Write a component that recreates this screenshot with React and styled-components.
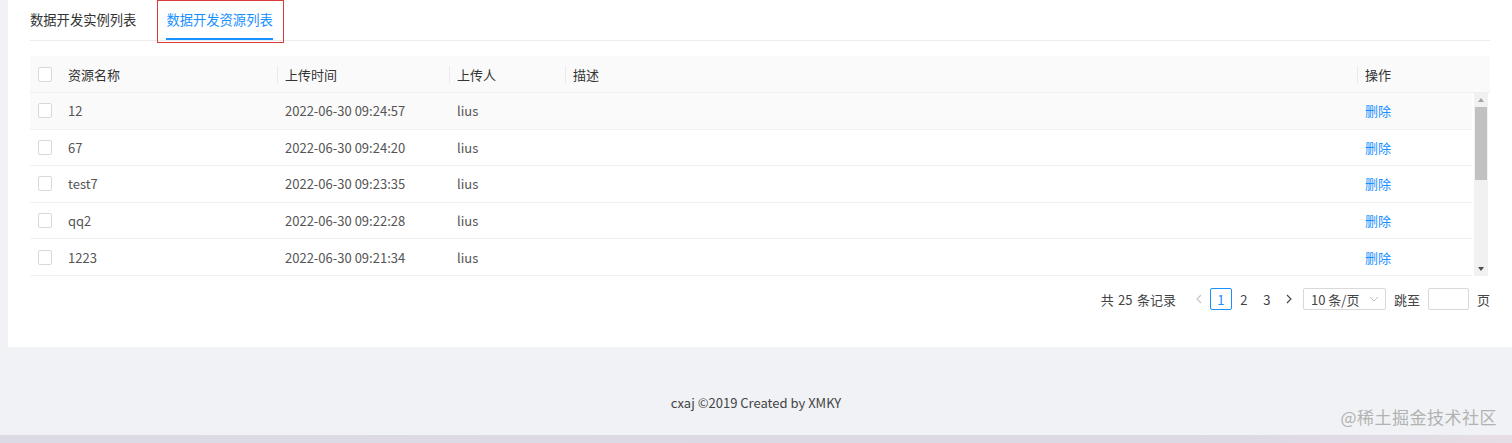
import React from "react";
import styled, { createGlobalStyle } from "styled-components";

const rows = [
  { name: "12", time: "2022-06-30 09:24:57", user: "lius", hover: true },
  { name: "67", time: "2022-06-30 09:24:20", user: "lius" },
  { name: "test7", time: "2022-06-30 09:23:35", user: "lius" },
  { name: "qq2", time: "2022-06-30 09:22:28", user: "lius" },
  { name: "1223", time: "2022-06-30 09:21:34", user: "lius" },
];

const GlobalStyle = createGlobalStyle`
  html, body {
    margin: 0;
    padding: 0;
    background: #f0f2f5;
    font-family: "Noto Sans CJK SC", "Noto Sans", sans-serif;
  }
  * { box-sizing: border-box; }
`;

const App = () => {
  return (
    <>
      <GlobalStyle />
      <Page>
        <Card>
          <TabBar>
            <Tab>数据开发实例列表</Tab>
            <Tab active>
              数据开发资源列表
              <Mark />
            </Tab>
          </TabBar>

          <Table>
            <HeadRow>
              <Cell>
                <Check />
              </Cell>
              <HeadCell>资源名称</HeadCell>
              <HeadCell sep>上传时间</HeadCell>
              <HeadCell sep>上传人</HeadCell>
              <HeadCell sep>描述</HeadCell>
              <HeadCell sep>操作</HeadCell>
              <Cell />
            </HeadRow>
            <BodyWrap>
              <Body>
                {rows.map((r) => (
                  <Row key={r.name} hover={r.hover}>
                    <Cell>
                      <Check />
                    </Cell>
                    <Cell>{r.name}</Cell>
                    <Cell>{r.time}</Cell>
                    <Cell>{r.user}</Cell>
                    <Cell />
                    <Cell>
                      <LinkText>删除</LinkText>
                    </Cell>
                  </Row>
                ))}
              </Body>
              <ScrollBar>
                <Arrow up />
                <Thumb />
                <Track />
                <Arrow />
              </ScrollBar>
            </BodyWrap>
          </Table>

          <Pager>
            <Total>共 25 条记录</Total>
            <PageArrow disabled>
              <svg width="8" height="10" viewBox="0 0 8 10">
                <path d="M6 1 L2 5 L6 9" fill="none" stroke="currentColor" strokeWidth="1.1" />
              </svg>
            </PageArrow>
            <PageItem active>1</PageItem>
            <PageItem>2</PageItem>
            <PageItem>3</PageItem>
            <PageArrow>
              <svg width="8" height="10" viewBox="0 0 8 10">
                <path d="M2 1 L6 5 L2 9" fill="none" stroke="currentColor" strokeWidth="1.1" />
              </svg>
            </PageArrow>
            <SizeSelect>
              10 条/页
              <svg width="10" height="6" viewBox="0 0 10 6">
                <path d="M1 1 L5 5 L9 1" fill="none" stroke="#bfbfbf" strokeWidth="1" />
              </svg>
            </SizeSelect>
            <Jump>
              跳至
              <JumpInput />
              页
            </Jump>
          </Pager>
        </Card>

        <Footer>cxaj ©2019 Created by XMKY</Footer>
        <BottomStrip />
        <Watermark>@稀土掘金技术社区</Watermark>
      </Page>
    </>
  );
};

const Page = styled.div`
  position: relative;
  height: 443px;
  display: flex;
  flex-direction: column;
  overflow: hidden;
`;

const Card = styled.div`
  margin-left: 8px;
  height: 347px;
  background: #fff;
  padding: 0 22px;
`;

const TabBar = styled.div`
  display: flex;
  gap: 30px;
  height: 41px;
  border-bottom: 1px solid #ececec;
`;

const Tab = styled.div`
  position: relative;
  height: 40px;
  line-height: 40px;
  font-size: 13.3px;
  color: ${(p) => (p.active ? "#1890ff" : "#333")};
  border-bottom: 2px solid ${(p) => (p.active ? "#1890ff" : "transparent")};
`;

const Mark = styled.span`
  position: absolute;
  left: -9px;
  right: -11px;
  top: 0;
  height: 43px;
  border: 1px solid #d93a3a;
`;

const Table = styled.div`
  margin-top: 15px;
`;

const grid = `
  display: grid;
  grid-template-columns: 30px 217px 172px 116px 1fr 115px;
  align-items: center;
`;

const HeadRow = styled.div`
  ${grid}
  grid-template-columns: 30px 217px 172px 116px 1fr 115px 18px;
  height: 37px;
  background: #fafafa;
  border-bottom: 1px solid #f0f0f0;
  font-size: 13px;
  color: #333;
`;

const Cell = styled.div`
  padding: 0 8px;
  font-size: 13px;
  color: #555;
  white-space: nowrap;
  display: flex;
  align-items: center;
`;

const HeadCell = styled(Cell)`
  position: relative;
  color: #333;
  height: 100%;
  &::before {
    content: "";
    display: ${(p) => (p.sep ? "block" : "none")};
    position: absolute;
    left: 0;
    top: 10px;
    height: 17px;
    width: 1px;
    background: #eaeaea;
  }
`;

const Check = styled.span`
  display: block;
  width: 15px;
  height: 15px;
  border: 1px solid #d9d9d9;
  border-radius: 2px;
  background: #fff;
`;

const BodyWrap = styled.div`
  display: flex;
  height: 183px;
`;

const Body = styled.div`
  flex: 1;
  overflow: hidden;
`;

const Row = styled.div`
  ${grid}
  height: 36.6px;
  border-bottom: 1px solid #f0f0f0;
  background: ${(p) => (p.hover ? "#fafafa" : "#fff")};
`;

const LinkText = styled.span`
  color: #1890ff;
`;

const ScrollBar = styled.div`
  width: 14px;
  margin: 0 2px;
  display: flex;
  flex-direction: column;
  background: #f1f1f1;
`;

const Arrow = styled.div`
  height: 14px;
  display: flex;
  align-items: center;
  justify-content: center;
  &::after {
    content: "";
    border-left: 3.5px solid transparent;
    border-right: 3.5px solid transparent;
    ${(p) =>
      p.up ? "border-bottom: 4px solid #a3a3a3;" : "border-top: 4px solid #505050;"}
  }
`;

const Thumb = styled.div`
  height: 73px;
  margin: 0 1px;
  background: #c1c1c1;
`;

const Track = styled.div`
  flex: 1;
`;

const Pager = styled.div`
  display: flex;
  justify-content: flex-end;
  align-items: center;
  margin-top: 12px;
  height: 22px;
  font-size: 13px;
  color: #444;
`;

const Total = styled.span`
  margin-right: 12px;
  word-spacing: 1.5px;
`;

const PageArrow = styled.span`
  width: 22px;
  height: 22px;
  display: flex;
  align-items: center;
  justify-content: center;
  color: ${(p) => (p.disabled ? "#c4c4c4" : "#444")};
`;

const PageItem = styled.span`
  min-width: 22px;
  height: 22px;
  display: flex;
  align-items: center;
  justify-content: center;
  border: 1px solid ${(p) => (p.active ? "#1890ff" : "transparent")};
  border-radius: 2px;
  color: ${(p) => (p.active ? "#1890ff" : "#444")};
  margin-left: ${(p) => (p.active ? "0" : "1px")};
`;

const SizeSelect = styled.span`
  margin-left: 3px;
  width: 83px;
  height: 22px;
  border: 1px solid #d9d9d9;
  border-radius: 2px;
  display: flex;
  align-items: center;
  justify-content: space-between;
  padding: 0 6px 0 7px;
  color: #444;
`;

const Jump = styled.span`
  display: flex;
  align-items: center;
  margin-left: 8px;
  gap: 8px;
`;

const JumpInput = styled.span`
  width: 41px;
  height: 22px;
  border: 1px solid #d9d9d9;
  border-radius: 2px;
  background: #fff;
`;

const Footer = styled.div`
  flex: 1;
  display: flex;
  align-items: center;
  justify-content: center;
  padding-top: 22px;
  font-size: 13px;
  color: #444;
`;

const BottomStrip = styled.div`
  height: 8px;
  background: linear-gradient(90deg, #dcdae3 0%, #dcd9e3 80%, #e6dde6 100%);
`;

const Watermark = styled.div`
  position: absolute;
  right: 15px;
  bottom: 14px;
  font-size: 17px;
  color: #b2b2b2;
  letter-spacing: 0.5px;
`;

export default App;
